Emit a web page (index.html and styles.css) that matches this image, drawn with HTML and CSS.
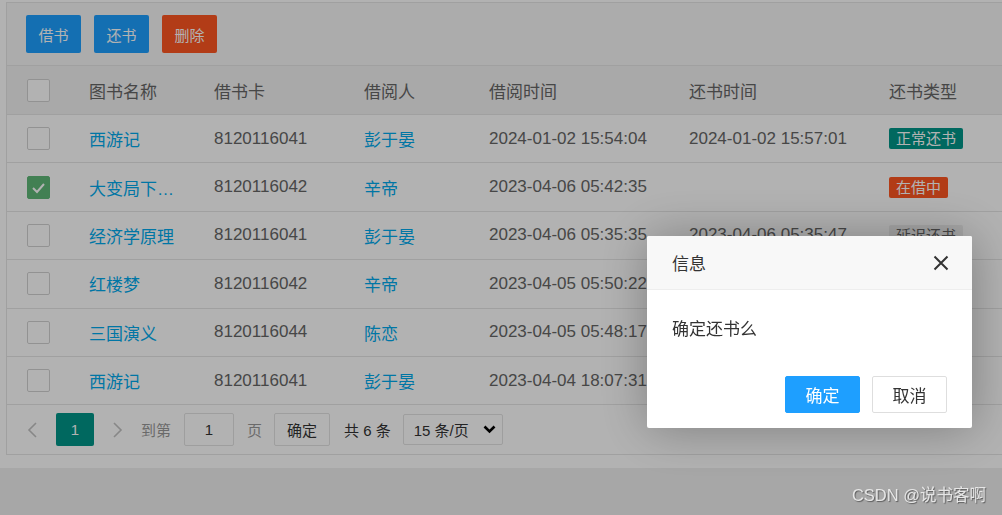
FILE: index.html
```html
<!DOCTYPE html>
<html lang="zh-CN">
<head>
<meta charset="utf-8">
<title>借阅管理</title>
<link rel="stylesheet" href="styles.css">
</head>
<body>
<div class="page">
  <div class="table-box">
    <div class="toolbar">
      <button class="btn btn-normal">借书</button>
      <button class="btn btn-normal">还书</button>
      <button class="btn btn-danger">删除</button>
    </div>
    <div class="row head">
      <div class="cell"><span class="checkbox"></span></div>
      <div class="cell">图书名称</div>
      <div class="cell">借书卡</div>
      <div class="cell">借阅人</div>
      <div class="cell">借阅时间</div>
      <div class="cell">还书时间</div>
      <div class="cell">还书类型</div>
    </div>
    <div class="row">
      <div class="cell"><span class="checkbox"></span></div>
      <div class="cell link">西游记</div>
      <div class="cell">8120116041</div>
      <div class="cell link">彭于晏</div>
      <div class="cell">2024-01-02 15:54:04</div>
      <div class="cell">2024-01-02 15:57:01</div>
      <div class="cell"><span class="tag tag-green">正常还书</span></div>
    </div>
    <div class="row">
      <div class="cell"><span class="checkbox checked"><svg width="23" height="23" viewBox="0 0 23 23"><polyline points="6,12 10,16 17,8" fill="none" stroke="#fff" stroke-width="2"/></svg></span></div>
      <div class="cell link">大变局下的中国经济</div>
      <div class="cell">8120116042</div>
      <div class="cell link">辛帝</div>
      <div class="cell">2023-04-06 05:42:35</div>
      <div class="cell"></div>
      <div class="cell"><span class="tag tag-red">在借中</span></div>
    </div>
    <div class="row">
      <div class="cell"><span class="checkbox"></span></div>
      <div class="cell link">经济学原理</div>
      <div class="cell">8120116041</div>
      <div class="cell link">彭于晏</div>
      <div class="cell">2023-04-06 05:35:35</div>
      <div class="cell">2023-04-06 05:35:47</div>
      <div class="cell"><span class="tag tag-gray">延迟还书</span></div>
    </div>
    <div class="row">
      <div class="cell"><span class="checkbox"></span></div>
      <div class="cell link">红楼梦</div>
      <div class="cell">8120116042</div>
      <div class="cell link">辛帝</div>
      <div class="cell">2023-04-05 05:50:22</div>
      <div class="cell">2023-04-05 05:51:10</div>
      <div class="cell"><span class="tag tag-green">正常还书</span></div>
    </div>
    <div class="row">
      <div class="cell"><span class="checkbox"></span></div>
      <div class="cell link">三国演义</div>
      <div class="cell">8120116044</div>
      <div class="cell link">陈恋</div>
      <div class="cell">2023-04-05 05:48:17</div>
      <div class="cell">2023-04-05 05:49:02</div>
      <div class="cell"><span class="tag tag-green">正常还书</span></div>
    </div>
    <div class="row">
      <div class="cell"><span class="checkbox"></span></div>
      <div class="cell link">西游记</div>
      <div class="cell">8120116041</div>
      <div class="cell link">彭于晏</div>
      <div class="cell">2023-04-04 18:07:31</div>
      <div class="cell">2023-04-04 18:08:05</div>
      <div class="cell"><span class="tag tag-green">正常还书</span></div>
    </div>
    <div class="pager">
      <span class="pg-arrow"><svg width="10" height="16" viewBox="0 0 10 16"><polyline points="9,1 2,8 9,15" fill="none" stroke="#c2c2c2" stroke-width="1.6"/></svg></span>
      <span class="pg-cur">1</span>
      <span class="pg-arrow pg-next"><svg width="10" height="16" viewBox="0 0 10 16"><polyline points="1,1 8,8 1,15" fill="none" stroke="#c2c2c2" stroke-width="1.6"/></svg></span>
      <span class="pg-label">到第</span>
      <span class="pg-input">1</span>
      <span class="pg-label pg-label-page">页</span>
      <button class="pg-btn">确定</button>
      <span class="pg-count">共 6 条</span>
      <div class="pg-select"><span>15 条/页</span><svg width="13" height="9" viewBox="0 0 13 9"><polyline points="1.5,1.5 6.5,6.5 11.5,1.5" fill="none" stroke="#000" stroke-width="2.6"/></svg></div>
    </div>
  </div>
</div>
<div class="shade"></div>
<div class="dialog">
  <div class="dialog-title">
    <span>信息</span>
    <span class="dialog-close"><svg width="16" height="16" viewBox="0 0 16 16"><path d="M1.5 1.5 L14.5 14.5 M14.5 1.5 L1.5 14.5" stroke="#333" stroke-width="2" fill="none"/></svg></span>
  </div>
  <div class="dialog-content">确定还书么</div>
  <div class="dialog-btns">
    <button class="dbtn dbtn-primary">确定</button>
    <button class="dbtn">取消</button>
  </div>
</div>
<div class="watermark">CSDN @说书客啊</div>
</body>
</html>
```

FILE: styles.css
```css
* { box-sizing: border-box; }
html, body { margin: 0; padding: 0; }
body {
  width: 1002px;
  height: 515px;
  overflow: hidden;
  background: #f0f0f0;
  font-family: "Liberation Sans", "Noto Sans CJK SC", sans-serif;
  color: #666;
}
.page {
  background: #fff;
  height: 468px;
  padding: 2px 0 0 6px;
}
.table-box {
  width: 1150px;
  border: 1px solid #e6e6e6;
  border-right: none;
  background: #fff;
}
.toolbar {
  height: 63px;
  background: #f6f6f6;
  border-bottom: 1px solid #e6e6e6;
  display: flex;
  align-items: center;
  gap: 13px;
  padding-left: 19px;
}
.btn {
  width: 55px;
  height: 38px;
  border: none;
  border-radius: 2px;
  color: #fff;
  font-family: inherit;
  font-size: 15px;
  padding: 0;
}
.btn-normal { background: #1e9fff; }
.btn-danger { background: #ff5722; }
.row {
  display: grid;
  grid-template-columns: 63px 125px 150px 125px 200px 200px 200px;
  height: 48.4px;
  border-bottom: 1px solid #e6e6e6;
  align-items: center;
  font-size: 17px;
}
.row.head {
  height: 49px;
  background: #f2f2f2;
  color: #666;
}
.cell {
  padding: 0 19px;
  white-space: nowrap;
  overflow: hidden;
  text-overflow: ellipsis;
}
.cell:first-child { padding-left: 20px; display: flex; }
.link { color: #01aaed; }
.checkbox {
  width: 23px;
  height: 23px;
  border: 1px solid #d2d2d2;
  border-radius: 2px;
  background: #fff;
  display: block;
}
.checkbox.checked {
  background: #5fb878;
  border-color: #5fb878;
}
.checkbox svg { display: block; margin: -1px; }
.tag {
  display: inline-block;
  height: 21px;
  line-height: 21px;
  padding: 0 7px;
  font-size: 15px;
  border-radius: 2px;
  color: #fff;
}
.tag-green { background: #009688; }
.tag-red { background: #ff5722; }
.tag-gray { background: #eee; color: #666; }
.pager {
  height: 49px;
  display: flex;
  align-items: center;
  padding-left: 20px;
  font-size: 15px;
}
.pg-arrow { display: flex; width: 10px; margin-right: 19px; }
.pg-next { margin-right: 18px; }
.pg-cur {
  width: 38px;
  height: 33px;
  line-height: 33px;
  text-align: center;
  background: #009688;
  color: #fff;
  border-radius: 2px;
  margin-right: 19px;
}
.pg-label { color: #999; margin-right: 13px; }
.pg-label-page { margin-right: 12px; }
.pg-input {
  width: 50px;
  height: 33px;
  line-height: 31px;
  border: 1px solid #e2e2e2;
  border-radius: 2px;
  text-align: center;
  color: #333;
  margin-right: 13px;
}
.pg-btn {
  width: 56px;
  height: 33px;
  border: 1px solid #e2e2e2;
  border-radius: 2px;
  background: #fff;
  color: #333;
  font-family: inherit;
  font-size: 15px;
  padding: 0;
  margin-right: 14px;
}
.pg-count { color: #333; margin-right: 12px; }
.pg-select {
  width: 100px;
  height: 31px;
  border: 1px solid #e2e2e2;
  border-radius: 2px;
  display: flex;
  align-items: center;
  justify-content: space-between;
  padding: 0 6px 0 10px;
  color: #333;
}
.pg-select svg { display: block; }
.shade {
  position: fixed;
  inset: 0;
  background: rgba(0, 0, 0, 0.3);
  z-index: 10;
}
.dialog {
  position: fixed;
  left: 647px;
  top: 236px;
  width: 325px;
  height: 192px;
  background: #fff;
  border-radius: 2px;
  box-shadow: 1px 1px 50px rgba(0, 0, 0, 0.3);
  z-index: 11;
  color: #333;
  font-size: 17px;
}
.dialog-title {
  height: 54px;
  background: #f8f8f8;
  border-bottom: 1px solid #eee;
  border-radius: 2px 2px 0 0;
  display: flex;
  align-items: center;
  justify-content: space-between;
  padding: 0 23px 0 25px;
}
.dialog-close svg { display: block; }
.dialog-content {
  padding: 25px 25px 0;
  line-height: 30px;
  height: 86px;
}
.dialog-btns {
  display: flex;
  justify-content: flex-end;
  gap: 12px;
  padding: 0 25px;
}
.dbtn {
  width: 75px;
  height: 37px;
  border: 1px solid #dedede;
  border-radius: 2px;
  background: #fff;
  color: #333;
  font-family: inherit;
  font-size: 17px;
  padding: 0;
}
.dbtn-primary {
  background: #1e9fff;
  border-color: #1e9fff;
  color: #fff;
}
.watermark {
  position: fixed;
  right: 16px;
  bottom: 9px;
  font-size: 16.5px;
  color: #e6e6e6;
  text-shadow: 1px 1px 1px rgba(0, 0, 0, 0.45);
  z-index: 12;
}
```
